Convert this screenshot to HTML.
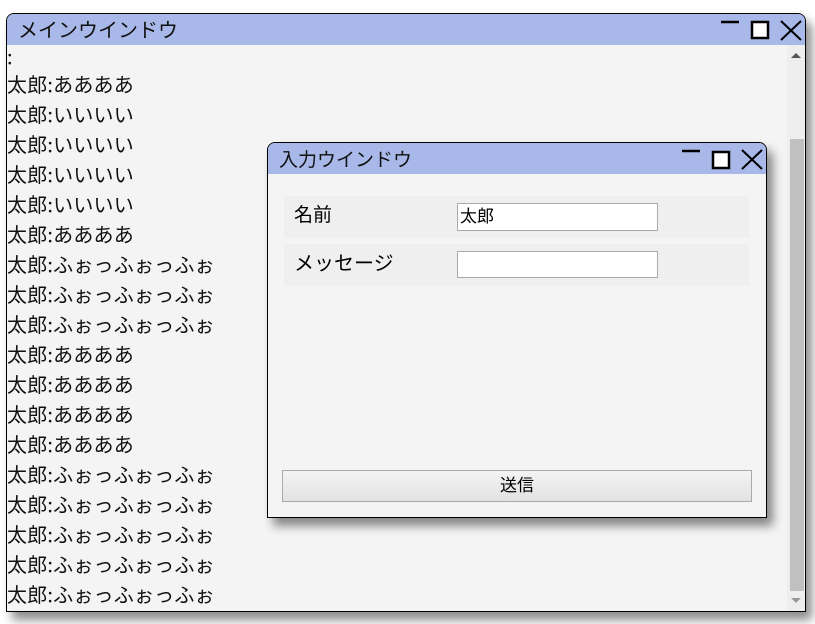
<!DOCTYPE html>
<html><head><meta charset="utf-8"><style>
body{margin:0;width:815px;height:624px;background:#fff;position:relative;overflow:hidden;font-family:"Liberation Sans","Noto Sans CJK JP",sans-serif;}
.win{position:absolute;border:1px solid #000;border-radius:8px 8px 0 0;background:#f4f4f4;box-shadow:6px 8px 10px rgba(0,0,0,.45);overflow:hidden;}
.tb{position:absolute;left:0;right:0;top:0;background:#a8b8e8;color:#111;}
.line{height:30px;line-height:30px;font-size:20px;color:#111;white-space:nowrap;font-family:"Noto Sans CJK JP",sans-serif;letter-spacing:0.2px;}
.ic{position:absolute;}
</style></head><body>
<div class="win" style="left:6px;top:13px;width:798px;height:597px;">
 <div class="tb" style="height:31px;font-size:20px;line-height:30px;padding-left:11px;font-family:'Noto Sans CJK JP',sans-serif;">メインウインドウ</div>
 <svg class="ic" style="left:712px;top:4px" width="86" height="24" viewBox="0 0 86 24">
  <line x1="2" y1="4" x2="20" y2="4" stroke="#000" stroke-width="2.5"/>
  <rect x="33" y="4" width="16" height="16" fill="#fff" stroke="#000" stroke-width="2.5"/>
  <path d="M62 3L82 22M82 3L62 22" stroke="#000" stroke-width="2"/>
 </svg>
 <div style="position:absolute;left:0;top:31px;">
  <div class="line" style="height:24px;line-height:22px;">:</div>
  <div class="line">太郎:ああああ</div>
  <div class="line">太郎:いいいい</div>
  <div class="line">太郎:いいいい</div>
  <div class="line">太郎:いいいい</div>
  <div class="line">太郎:いいいい</div>
  <div class="line">太郎:ああああ</div>
  <div class="line">太郎:ふぉっふぉっふぉ</div>
  <div class="line">太郎:ふぉっふぉっふぉ</div>
  <div class="line">太郎:ふぉっふぉっふぉ</div>
  <div class="line">太郎:ああああ</div>
  <div class="line">太郎:ああああ</div>
  <div class="line">太郎:ああああ</div>
  <div class="line">太郎:ああああ</div>
  <div class="line">太郎:ふぉっふぉっふぉ</div>
  <div class="line">太郎:ふぉっふぉっふぉ</div>
  <div class="line">太郎:ふぉっふぉっふぉ</div>
  <div class="line">太郎:ふぉっふぉっふぉ</div>
  <div class="line">太郎:ふぉっふぉっふぉ</div>
 </div>
 <div style="position:absolute;left:780px;top:31px;width:18px;height:566px;background:#eee;">
  <div style="position:absolute;left:3px;top:94px;width:14px;height:452px;background:#c0c0c0;"></div>
  <svg style="position:absolute;left:4px;top:8px" width="10" height="6"><path d="M0 5L5 0L10 5Z" fill="#555"/></svg>
  <svg style="position:absolute;left:4px;top:553px" width="10" height="6"><path d="M0 0L5 5L10 0Z" fill="#999"/></svg>
 </div>
</div>
<div class="win" style="left:267px;top:142px;width:498px;height:374px;">
 <div class="tb" style="height:31px;font-size:19px;line-height:31px;padding-left:11px;font-family:'Noto Sans CJK JP',sans-serif;">入力ウインドウ</div>
 <svg class="ic" style="left:412px;top:4px" width="86" height="24" viewBox="0 0 86 24">
  <line x1="2" y1="4" x2="20" y2="4" stroke="#000" stroke-width="2.5"/>
  <rect x="33" y="5" width="16" height="16" fill="#fff" stroke="#000" stroke-width="2.5"/>
  <path d="M62 3L82 22M82 3L62 22" stroke="#000" stroke-width="2"/>
 </svg>
 <div style="position:absolute;left:16px;top:53px;width:465px;height:42px;background:#efefef;">
  <div style="position:absolute;left:10px;top:0;line-height:40px;font-size:19px;">名前</div>
  <div style="position:absolute;left:173px;top:7px;width:201px;height:28px;background:#fff;border:1px solid #aaa;font-size:17px;line-height:26px;padding-left:2px;box-sizing:border-box;">太郎</div>
 </div>
 <div style="position:absolute;left:16px;top:101px;width:465px;height:42px;background:#efefef;">
  <div style="position:absolute;left:10px;top:0;line-height:40px;font-size:20px;">メッセージ</div>
  <div style="position:absolute;left:173px;top:7px;width:201px;height:27px;background:#fff;border:1px solid #aaa;box-sizing:border-box;"></div>
 </div>
 <div style="position:absolute;left:14px;top:327px;width:470px;height:32px;border:1px solid #aaa;box-sizing:border-box;background:linear-gradient(#f4f4f4,#e2e2e2);text-align:center;font-size:17px;line-height:30px;">送信</div>
</div>
</body></html>
